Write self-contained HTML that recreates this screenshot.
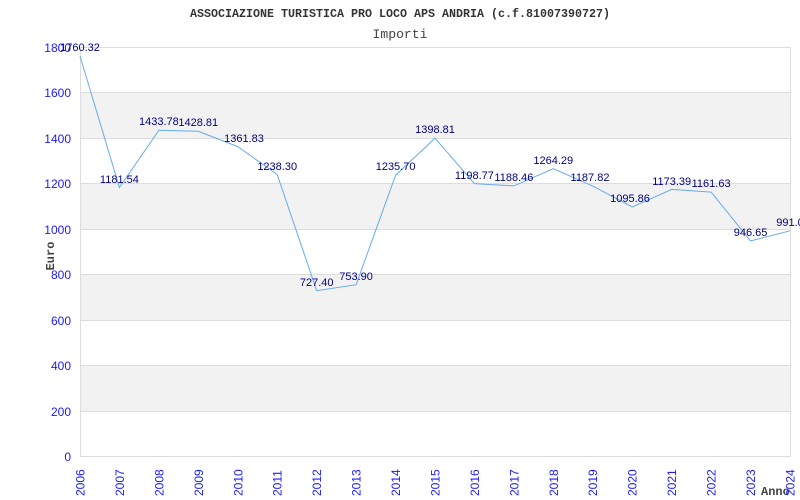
<!DOCTYPE html>
<html><head><meta charset="utf-8"><style>
html,body{margin:0;padding:0;background:#fff;width:800px;height:500px;overflow:hidden}
svg{display:block}
.y{font-family:"Liberation Sans",sans-serif;font-size:12px;fill:#1a1aff;text-anchor:end}
.x{font-family:"Liberation Sans",sans-serif;font-size:12px;fill:#1a1aff}
.l{font-family:"Liberation Sans",sans-serif;font-size:11px;fill:#000080;text-anchor:middle}
</style></head><body>
<svg width="800" height="500" xmlns="http://www.w3.org/2000/svg">
<text x="400" y="17" text-anchor="middle" font-family="Liberation Mono,monospace" font-weight="bold" font-size="12" fill="#333" textLength="420" lengthAdjust="spacingAndGlyphs">ASSOCIAZIONE TURISTICA PRO LOCO APS ANDRIA (c.f.81007390727)</text>
<text x="400" y="38" text-anchor="middle" font-family="Liberation Mono,monospace" font-size="13" fill="#444" textLength="55" lengthAdjust="spacingAndGlyphs">Importi</text>
<g fill="#f2f2f2">
<rect x="80" y="92" width="710" height="46"/>
<rect x="80" y="183" width="710" height="46"/>
<rect x="80" y="274" width="710" height="46"/>
<rect x="80" y="365" width="710" height="46"/>
</g>
<g stroke="#ddd" stroke-width="1">
<line x1="80" y1="47.5" x2="790" y2="47.5"/>
<line x1="80" y1="92.5" x2="790" y2="92.5"/>
<line x1="80" y1="138.5" x2="790" y2="138.5"/>
<line x1="80" y1="183.5" x2="790" y2="183.5"/>
<line x1="80" y1="229.5" x2="790" y2="229.5"/>
<line x1="80" y1="274.5" x2="790" y2="274.5"/>
<line x1="80" y1="320.5" x2="790" y2="320.5"/>
<line x1="80" y1="365.5" x2="790" y2="365.5"/>
<line x1="80" y1="411.5" x2="790" y2="411.5"/>
<line x1="80.5" y1="47" x2="80.5" y2="456"/>
<line x1="790.5" y1="47" x2="790.5" y2="456"/>
<line x1="80" y1="456.5" x2="791" y2="456.5"/>
</g>
<g class="y">
<text x="71" y="52">1800</text><text x="71" y="97">1600</text><text x="71" y="143">1400</text>
<text x="71" y="188">1200</text><text x="71" y="234">1000</text><text x="71" y="279">800</text>
<text x="71" y="325">600</text><text x="71" y="370">400</text><text x="71" y="416">200</text><text x="71" y="461">0</text>
</g>
<text transform="translate(54,256) rotate(-90)" text-anchor="middle" font-family="Liberation Mono,monospace" font-weight="bold" font-size="12" fill="#444">Euro</text>
<text x="761" y="495" font-family="Liberation Mono,monospace" font-weight="bold" font-size="12" fill="#444">Anno</text>
<g class="x">
<text transform="translate(84.5,496) rotate(-90)">2006</text>
<text transform="translate(123.9,496) rotate(-90)">2007</text>
<text transform="translate(163.4,496) rotate(-90)">2008</text>
<text transform="translate(202.8,496) rotate(-90)">2009</text>
<text transform="translate(242.3,496) rotate(-90)">2010</text>
<text transform="translate(281.7,496) rotate(-90)">2011</text>
<text transform="translate(321.1,496) rotate(-90)">2012</text>
<text transform="translate(360.6,496) rotate(-90)">2013</text>
<text transform="translate(400,496) rotate(-90)">2014</text>
<text transform="translate(439.5,496) rotate(-90)">2015</text>
<text transform="translate(478.9,496) rotate(-90)">2016</text>
<text transform="translate(518.3,496) rotate(-90)">2017</text>
<text transform="translate(557.8,496) rotate(-90)">2018</text>
<text transform="translate(597.2,496) rotate(-90)">2019</text>
<text transform="translate(636.7,496) rotate(-90)">2020</text>
<text transform="translate(676.1,496) rotate(-90)">2021</text>
<text transform="translate(715.5,496) rotate(-90)">2022</text>
<text transform="translate(755,496) rotate(-90)">2023</text>
<text transform="translate(794.4,496) rotate(-90)">2024</text>
</g>
<polyline fill="none" stroke="#66aaee" stroke-width="1" points="80,56 119.4,187.5 158.9,130.2 198.3,131.3 237.8,146.6 277.2,174.6 316.7,290.7 356.1,284.7 395.6,175.2 435,138.2 474.4,183.6 513.9,185.9 553.3,168.7 592.8,186.1 632.2,207 671.7,189.4 711.1,192.1 750.6,240.9 790,230.8"/>
<g class="l">
<text x="80" y="51">1760.32</text>
<text x="119.4" y="183">1181.54</text>
<text x="158.9" y="125">1433.78</text>
<text x="198.3" y="126">1428.81</text>
<text x="244" y="142">1361.83</text>
<text x="277.2" y="170">1238.30</text>
<text x="316.7" y="286">727.40</text>
<text x="356.1" y="280">753.90</text>
<text x="395.6" y="170">1235.70</text>
<text x="435" y="133">1398.81</text>
<text x="474.4" y="179">1198.77</text>
<text x="513.9" y="181">1188.46</text>
<text x="553.3" y="164">1264.29</text>
<text x="590" y="181">1187.82</text>
<text x="630" y="202">1095.86</text>
<text x="671.7" y="185">1173.39</text>
<text x="711.1" y="187">1161.63</text>
<text x="750.6" y="236">946.65</text>
<text x="790" y="226">991.0</text>
</g>
</svg>
</body></html>
